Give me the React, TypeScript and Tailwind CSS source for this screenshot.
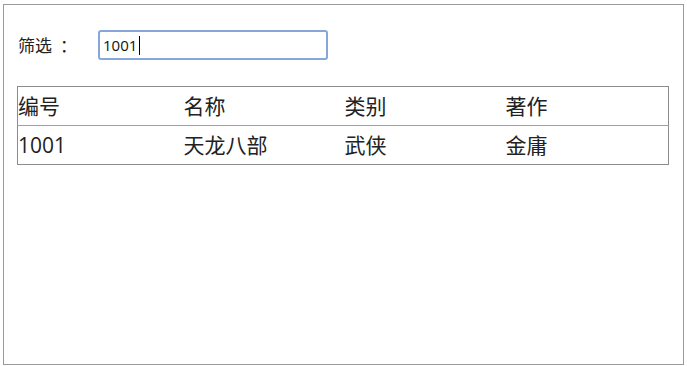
const books = [{ id: "1001", name: "天龙八部", kind: "武侠", author: "金庸" }];

export default function App() {
  return (
    <div className="h-[366px] w-[687px] overflow-hidden bg-white pl-[3px] pt-[4px] font-['Open_Sans','Noto_Sans_CJK_SC',sans-serif] text-[#222]">
      <div className="h-[361px] w-[681px] border border-[#9a9a9a] pl-[13px] pt-[25px]">
        {/* Filter */}
        <div className="flex items-center">
          <span className="flex w-[81px] pl-[1px] text-[17px] leading-none">
            筛选<span className="ml-[8px]">：</span>
          </span>
          <div className="flex h-[30px] w-[230px] items-center rounded-[3px] border-2 border-[#86a6dc] pl-[3px] text-[15px] leading-none text-[#111]">
            1001
            <span className="ml-[2px] h-[19px] w-px bg-black" />
          </div>
        </div>

        {/* Table */}
        <table className="mt-[26px] w-[651px] table-fixed border-collapse border border-[#8c8c8c] text-left text-[21px] leading-none">
          <colgroup>
            <col className="w-[166px]" />
            <col className="w-[161px]" />
            <col className="w-[161px]" />
            <col className="w-[163px]" />
          </colgroup>
          <thead>
            <tr className="border-b border-[#a0a0a0]">
              <th className="h-[39px] p-0 font-normal">编号</th>
              <th className="h-[39px] p-0 font-normal">名称</th>
              <th className="h-[39px] p-0 font-normal">类别</th>
              <th className="h-[39px] p-0 font-normal">著作</th>
            </tr>
          </thead>
          <tbody>
            {books.map((b) => (
              <tr key={b.id}>
                <td className="h-[39px] p-0">{b.id}</td>
                <td className="h-[39px] p-0">{b.name}</td>
                <td className="h-[39px] p-0">{b.kind}</td>
                <td className="h-[39px] p-0">{b.author}</td>
              </tr>
            ))}
          </tbody>
        </table>
      </div>
    </div>
  );
}
